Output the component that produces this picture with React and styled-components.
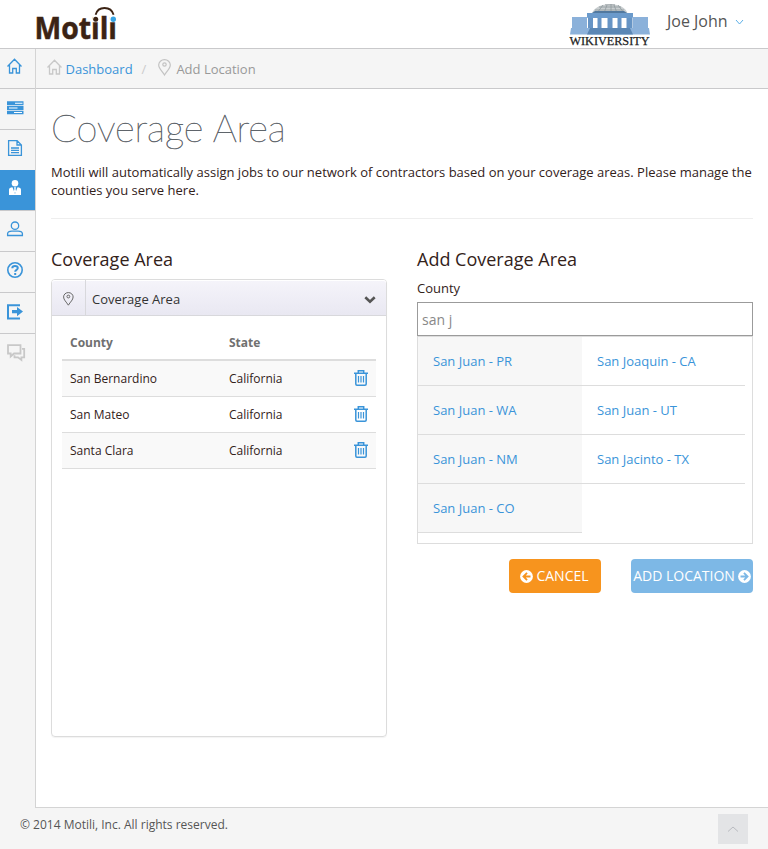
import React from "react";
import styled, { createGlobalStyle } from "styled-components";

const BLUE = "#3a94d9";
const BROWN = "#3b2314";

const GlobalStyle = createGlobalStyle`
  *, *::before, *::after { box-sizing: border-box; }
  body {
    margin: 0;
    background: #f5f5f5;
    color: #33221a;
    font-family: "Open Sans", "Noto Sans", sans-serif;
    font-size: 13px;
    line-height: 18px;
  }
  svg { display: block; flex: none; }
`;

const Page = styled.div`
  width: 768px;
  height: 849px;
  display: flex;
  flex-direction: column;
  overflow: hidden;
`;

const Header = styled.header`
  height: 49px;
  display: flex;
  background: #fff;
  border-bottom: 1px solid #c9c9cb;
`;

const Brand = styled.div`
  flex: 1;
  padding-left: 34px;
`;

const UserMenu = styled.button`
  display: flex;
  align-items: center;
  width: 118px;
  height: 42px;
  padding: 0 0 0 17px;
  border: 0;
  background: none;
  color: #555;
  font: 16px/22px "Open Sans", sans-serif;
  white-space: nowrap;

  svg { margin: 1px 0 0 7px; }
`;

const Body = styled.div`
  height: 758px;
  display: flex;
`;

const Sidebar = styled.nav`
  width: 35px;
`;

const SideItem = styled.a`
  display: block;
  height: ${(p) => p.$height || 41}px;
  border-bottom: ${(p) => (p.$noBorder ? 0 : 1)}px solid #c9c9cb;
  background: ${(p) => (p.$active ? BLUE : "transparent")};
  color: ${(p) => (p.$active ? "#fff" : p.$muted ? "#c8c8c8" : BLUE)};
`;

const Main = styled.main`
  flex: 1;
  border-left: 1px solid #d4d4d4;
  background: #fff;
`;

const Breadcrumb = styled.div`
  height: 40px;
  display: flex;
  align-items: center;
  padding-left: 11px;
  background: #f5f5f5;
  border-bottom: 1px solid #c9c9cb;
  color: #999;
  line-height: 39px;
`;

const CrumbLink = styled.a`
  color: ${BLUE};
  margin: 1px 0 0 3.5px;
`;

const CrumbSlash = styled.span`
  color: #ccc;
  margin: 1px 12px 0 9px;
`;

const CrumbText = styled.span`
  margin: 1px 0 0 4px;
`;

const Content = styled.div`
  padding: 0 15px;
`;

const Title = styled.h1`
  height: 74px;
  margin: 0;
  padding-top: 13px;
  color: #5f656b;
  font: 100 38px/50px Lato, sans-serif;
  -webkit-text-stroke: 0.5px #5f656b;
  letter-spacing: -0.1px;
  white-space: nowrap;
`;

const Intro = styled.p`
  height: 56px;
  margin: 0;
  border-bottom: 1px solid #eee;
  white-space: nowrap;
  letter-spacing: 0.005px;
`;

const Columns = styled.div`
  display: grid;
  grid-template-columns: 336px 336px;
  column-gap: 30px;
  padding-top: 27px;
`;

const Heading = styled.h2`
  margin: 0;
  height: 33px;
  font-size: 18px;
  font-weight: 400;
  line-height: 26px;
`;

const Panel = styled.section`
  height: 458px;
  border: 1px solid #dcdcdc;
  border-radius: 4px;
  box-shadow: 0 1px 1px rgba(0, 0, 0, 0.05);
`;

const PanelHeader = styled.div`
  display: flex;
  align-items: center;
  height: 36px;
  padding-right: 10px;
  border-bottom: 1px solid #d8d8dc;
  border-radius: 3px 3px 0 0;
  background: linear-gradient(#f5f4fa, #e9e8f2);
  box-shadow: inset 0 1px #fff;
  color: #333;
`;

const PanelIcon = styled.span`
  display: flex;
  align-items: center;
  justify-content: center;
  width: 34px;
  height: 35px;
  padding-top: 2px;
  border-right: 1px solid #d8d8dc;
`;

const PanelTitle = styled.span`
  flex: 1;
  padding: 3px 0 0 6px;
`;

const PanelToggle = styled.span`
  padding-top: 4px;
`;

const Table = styled.table`
  width: 314px;
  margin: 8px 10px 0;
  border-collapse: separate;
  border-spacing: 0;
  table-layout: fixed;
  font-size: 12px;
`;

const HeadCell = styled.th`
  width: ${(p) => p.$width}px;
  height: 37px;
  padding: 2px 8px 0;
  border-bottom: 2px solid #ddd;
  color: #707070;
  text-align: left;
  font-weight: 700;
`;

const Row = styled.tr`
  background: ${(p) => (p.$shaded ? "#f9f9f9" : "#fff")};
`;

const Cell = styled.td`
  height: 36px;
  padding: 0 8px;
  border-bottom: 1px solid #ddd;
`;

const DeleteButton = styled.button`
  display: block;
  margin: 0 0 2px auto;
  padding: 0;
  border: 0;
  background: none;
  color: ${BLUE};
`;

const FieldLabel = styled.label`
  display: block;
  height: 23px;
`;

const Input = styled.input`
  display: block;
  width: 336px;
  height: 34px;
  padding: 0 4px 0;
  border: 1px solid #9b9b9b;
  border-radius: 0;
  outline: 0;
  color: #888;
  font: 14px "Open Sans", sans-serif;
`;

const Results = styled.div`
  display: grid;
  grid-template-columns: 164px 163px;
  grid-auto-rows: 49px;
  height: 208px;
  border: 1px solid #ddd;
`;

const Result = styled.a`
  padding-left: 15px;
  border-bottom: 1px solid #ddd;
  background: ${(p) => (p.$shaded ? "#f7f7f7" : "#fff")};
  color: ${BLUE};
  line-height: 48px;
`;

const Actions = styled.div`
  display: flex;
  justify-content: flex-end;
  gap: 30px;
  margin-top: 15px;
`;

const Button = styled.button`
  display: flex;
  align-items: center;
  justify-content: center;
  gap: 3px;
  width: ${(p) => p.$width}px;
  height: 34px;
  padding: 0 ${(p) => p.$inset || 0}px 0 0;
  border: 0;
  border-radius: 4px;
  background: ${(p) => p.$color};
  color: #fff;
  font: 14px/20px "Open Sans", sans-serif;
  white-space: nowrap;
`;

const Footer = styled.footer`
  flex: 1;
  display: flex;
  justify-content: space-between;
  padding: 0 20px;
  color: #555;
  font-size: 12px;
`;

const FooterRule = styled.div`
  height: 1px;
  margin-left: 35px;
  background: #d4d4d4;
`;

const Copyright = styled.span`
  padding-top: 8px;
`;

const TopButton = styled.button`
  display: grid;
  place-items: center;
  width: 30px;
  height: 30px;
  margin-top: 6px;
  padding: 0;
  border: 0;
  background: #e3e4e6;
`;

const MotiliLogo = () => (
  <svg width="90" height="48" viewBox="34 0 90 48" role="img">
    <text x="34.5" y="39" textLength="82.5" lengthAdjust="spacingAndGlyphs" fill={BROWN} stroke={BROWN} strokeWidth=".5"
      fontFamily="Open Sans" fontWeight="700" fontSize="29.5">Motili</text>
    <path d="M92.500 12h8v10.200h-8zM109.500 12h9v10.200h-9z" fill="#fff" />
    <circle cx="95.700" cy="19.300" r="2.500" fill={BROWN} />
    <circle cx="113.300" cy="19.300" r="2.700" fill="#36a3e4" />
    <path d="M95.600 14.800C98 5.700 111 5.700 113.600 14.800" fill="none" stroke={BROWN} strokeWidth="1.800" />
  </svg>
);

const WikiversityLogo = () => (
  <svg width="82" height="48" viewBox="568 0 82 48" role="img">
    <path d="M592 13.500C595 1 625 1 627.500 13.500Z" fill="#c9ced0" />
    <path d="M595 10h29M599 7h22M605 4.800h10M597 13l6-8M604 13l3-8M611 13V4M617 13l-3-8M624 13l-6-8"
      stroke="#8f999d" fill="none" strokeWidth=".8" />
    <path d="M592 13l3-2h29l3 2z" fill="#52799f" />
    <path d="M587 13h46v5h-46z" fill="#6b9acb" />
    <path d="M572 17h16v11h-16zM632 17h16v11h-16z" fill="#8bb1da" />
    <path d="M587 18h46v10h-46z" fill="#fff" />
    <path d="M588 18h5v10h-5zM597.500 18h4v10h-4zM607.500 18h5v10h-5zM617.500 18h4v10h-4zM626.500 18h6v10h-6z" fill="#6694c5" />
    <path d="M571 28h78l1 6.500h-80z" fill="#8bb1da" />
    <path d="M590 28h40l3 6.500h-46z" fill="#5b87b5" />
    <text x="569.500" y="45.300" textLength="80" lengthAdjust="spacingAndGlyphs" fill="#222" stroke="#222" strokeWidth=".25"
      fontFamily="Liberation Serif" fontSize="12.500">WIKIVERSITY</text>
  </svg>
);

// Each sidebar glyph is drawn on the full 35x40 tile.
const SideIcon = ({ children }) => (
  <svg width="35" height="40" viewBox="0 0 35 40" fill="none" stroke="currentColor" strokeWidth="1.3">{children}</svg>
);

const HOME_PATH = "M.5 8.500L7.500 1.300l7 7.200M2.500 7v8h3.200v-4.500h3.600V15h3.200V7";
const PIN_PATH = "M6.500 16C4 12 .7 9.500.7 6a5.800 5.300 0 0 1 11.600 0c0 3.500-3.300 6-5.800 10z";

const ICONS = {
  home: <path d={HOME_PATH} transform="translate(7 9)" />,
  tasks: (
    <g stroke="none">
      <path d="M7 12.300h16.500v3.900H7zM7 17h16.500v3.900H7zM7 21.700h16.500v3.500H7z" fill="currentColor" />
      <path d="M15 13.700h7.500v1H15zM9 18.400h8.500v1H9zM14 23h8v1h-8z" fill="#fff" />
    </g>
  ),
  document: (
    <path d="M8.600 10.600h8.500l4.300 4.400v10.400H8.600zM17 10.600V15h4.400M11 18h8M11 20.300h8M11 22.700h8" />
  ),
  contractor: (
    <g stroke="none">
      <circle cx="15" cy="13.200" r="3.300" fill="currentColor" />
      <path d="M9 25v-5.500q0-1.700 2-2l1.500-.3L15 24l2.500-6.800 1.500.3q2 .3 2 2V25z" fill="currentColor" />
      <path d="M14 17.300h2l-.4 1.700.5 2.500L15 23.500l-1.100-2 .5-2.500z" fill="currentColor" />
    </g>
  ),
  user: (
    <>
      <circle cx="15" cy="14.700" r="3.700" />
      <path d="M7.600 24.500v-1.800q.3-2.500 4.200-2.500h6.400q3.900 0 4.200 2.500v1.800z" />
    </>
  ),
  help: (
    <>
      <circle cx="15" cy="18" r="7.200" strokeWidth="1.600" />
      <path d="M12.300 16.300q0-2.300 2.700-2.300 2.800 0 2.800 2.100c0 1.800-2.600 1.600-2.600 3.600M15.200 21v1.900" strokeWidth="2" />
    </>
  ),
  logout: (
    <>
      <path d="M20 12.200H8v13.200h12" strokeWidth="2" />
      <path d="M12 17h5v-3l6 4.600-6 4.600v-3h-5z" fill="currentColor" stroke="none" />
    </>
  ),
  chat: (
    <path d="M8 11.200h12.500v8.300H14l-3.300 3v-3H8zM22 14.800h2.200v8.500h-2.800v2.700l-3.400-2.700h-3.500v-2" strokeWidth="1.800" />
  ),
};

const SIDE_ITEMS = [
  { icon: "home", height: 40 },
  { icon: "tasks" },
  { icon: "document", height: 40, noBorder: true },
  { icon: "contractor", active: true },
  { icon: "user" },
  { icon: "help" },
  { icon: "logout" },
  { icon: "chat", muted: true, noBorder: true },
];

const PinIcon = ({ size, color, strokeWidth = 1 }) => (
  <svg width={(size * 13) / 17} height={size} viewBox="0 0 13 17" fill="none" stroke={color} strokeWidth={strokeWidth}>
    <path d={PIN_PATH} />
    <circle cx="6.500" cy="5.500" r="1.700" />
  </svg>
);

const Chevron = ({ up, color, width = 9, stroke = 1 }) => (
  <svg width={width} height="8" viewBox={`0 0 ${width} 8`} fill="none" stroke={color} strokeWidth={stroke}>
    <path d={up ? `M1 6.500L${width / 2} 2L${width - 1} 6.500` : `M1 2L${width / 2} 6L${width - 1} 2`} />
  </svg>
);

const BoldChevron = () => (
  <svg width="12" height="8" viewBox="0 0 12 8" fill="none" stroke="#555" strokeWidth="2.600">
    <path d="M1.300 1.300L6 5.800l4.700-4.500" />
  </svg>
);

const TrashIcon = () => (
  <svg width="14" height="16" viewBox="0 0 14 16" fill="none" stroke="currentColor" strokeWidth="1.500">
    <path d="M0 3.300h14M4.300 3V.8h5.400V3M1.800 3.500V14q0 1.200 1.200 1.200h8q1.200 0 1.200-1.200V3.500" />
    <path d="M4.500 6v6.500M7 6v6.500M9.500 6v6.500" strokeWidth="1.200" />
  </svg>
);

const CircleArrow = ({ right, color }) => (
  <svg width="13" height="13" viewBox="0 0 12 12">
    <circle cx="6" cy="6" r="5.900" fill="#fff" />
    <path d={right ? "M2.300 6h6M5.500 2.700L8.800 6 5.500 9.300" : "M9.700 6h-6M6.500 2.700L3.200 6l3.300 3.300"}
      fill="none" stroke={color} strokeWidth="1.700" />
  </svg>
);

const COUNTIES = ["San Bernardino", "San Mateo", "Santa Clara"];

const MATCHES = [
  "San Juan - PR", "San Joaquin - CA",
  "San Juan - WA", "San Juan - UT",
  "San Juan - NM", "San Jacinto - TX",
  "San Juan - CO",
];

export default function App() {
  return (
    <>
      <GlobalStyle />
      <Page>
        <Header>
          <Brand><MotiliLogo /></Brand>
          <WikiversityLogo />
          <UserMenu>Joe John<Chevron color="#5cb0e8" /></UserMenu>
        </Header>
        <Body>
          <Sidebar>
            {SIDE_ITEMS.map((item) => (
              <SideItem key={item.icon} $height={item.height} $noBorder={item.noBorder} $active={item.active} $muted={item.muted}>
                <SideIcon>{ICONS[item.icon]}</SideIcon>
              </SideItem>
            ))}
          </Sidebar>
          <Main>
            <Breadcrumb>
              <svg width="15" height="19" viewBox="0 0 15 19" fill="none" stroke="#c8c8c8" strokeWidth="1.3"><path d={HOME_PATH} /></svg>
              <CrumbLink>Dashboard</CrumbLink>
              <CrumbSlash>/</CrumbSlash>
              <svg width="14" height="19" viewBox="0 0 14 19" fill="none" stroke="#c3c3c3" strokeWidth="1.2">
                <path d={PIN_PATH} />
                <circle cx="6.500" cy="5.500" r="1.700" />
              </svg>
              <CrumbText>Add Location</CrumbText>
            </Breadcrumb>
            <Content>
              <Title>Coverage Area</Title>
              <Intro>
                Motili will automatically assign jobs to our network of contractors based on your coverage areas. Please manage the
                <br />
                counties you serve here.
              </Intro>
              <Columns>
                <div>
                  <Heading>Coverage Area</Heading>
                  <Panel>
                    <PanelHeader>
                      <PanelIcon><PinIcon size={14} color="#666" strokeWidth={1.2} /></PanelIcon>
                      <PanelTitle>Coverage Area</PanelTitle>
                      <PanelToggle><BoldChevron /></PanelToggle>
                    </PanelHeader>
                    <Table>
                      <thead>
                        <tr>
                          <HeadCell $width={159}>County</HeadCell>
                          <HeadCell $width={105}>State</HeadCell>
                          <HeadCell $width={50} />
                        </tr>
                      </thead>
                      <tbody>
                        {COUNTIES.map((county, i) => (
                          <Row key={county} $shaded={i % 2 === 0}>
                            <Cell>{county}</Cell>
                            <Cell>California</Cell>
                            <Cell><DeleteButton><TrashIcon /></DeleteButton></Cell>
                          </Row>
                        ))}
                      </tbody>
                    </Table>
                  </Panel>
                </div>
                <div>
                  <Heading>Add Coverage Area</Heading>
                  <FieldLabel>County</FieldLabel>
                  <Input defaultValue="san j" />
                  <Results>
                    {MATCHES.map((match, i) => (
                      <Result key={match} $shaded={i % 2 === 0}>{match}</Result>
                    ))}
                  </Results>
                  <Actions>
                    <Button $color="#f7941e" $width={92} $inset={1}><CircleArrow color="#f7941e" />CANCEL</Button>
                    <Button $color="#7db8e6" $width={122}>ADD LOCATION<CircleArrow right color="#7db8e6" /></Button>
                  </Actions>
                </div>
              </Columns>
            </Content>
          </Main>
        </Body>
        <FooterRule />
        <Footer>
          <Copyright>© 2014 Motili, Inc. All rights reserved.</Copyright>
          <TopButton><Chevron up color="#b9bbc0" width={12} /></TopButton>
        </Footer>
      </Page>
    </>
  );
}
